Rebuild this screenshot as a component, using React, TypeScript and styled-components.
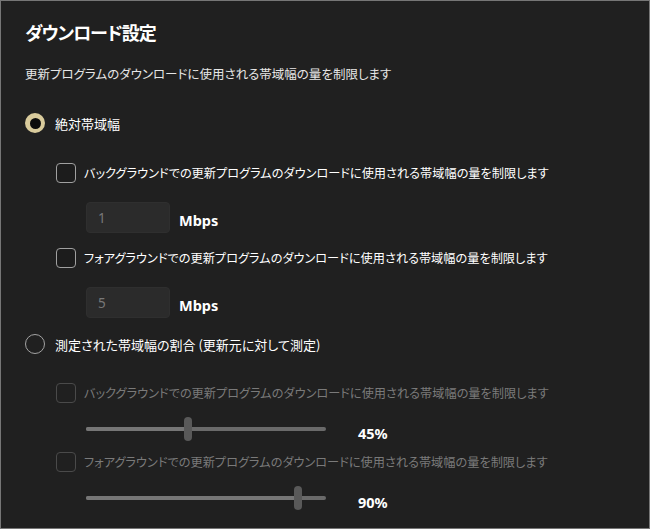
import styled, { createGlobalStyle } from "styled-components";

const GlobalStyle = createGlobalStyle`
  html, body {
    margin: 0;
    padding: 0;
    background: #202020;
  }
  body {
    font-family: "Noto Sans CJK JP", "Noto Sans", sans-serif;
    font-feature-settings: "palt";
    -webkit-font-smoothing: antialiased;
  }
`;

const Frame = styled.div`
  box-sizing: border-box;
  width: 650px;
  height: 529px;
  border: 1px solid #767676;
  background: #202020;
  padding: 19px 24px 0 24px;
  display: flex;
  flex-direction: column;
  color: #ffffff;
`;

const Title = styled.h1`
  margin: 0;
  font-size: 18px;
  line-height: 24px;
  font-weight: 600;
  letter-spacing: -1px;
`;

const Desc = styled.p`
  margin: 20px 0 0 0;
  font-size: 12.5px;
  line-height: 20px;
  color: #e6e6e6;
`;

const RadioRow = styled.div<{ $top: number }>`
  display: flex;
  align-items: center;
  gap: 10px;
  height: 20px;
  margin-top: ${(p) => p.$top}px;
  font-size: 13px;
`;

const RadioDot = styled.span<{ $on?: boolean }>`
  box-sizing: border-box;
  width: 20px;
  height: 20px;
  border-radius: 50%;
  flex: none;
  display: flex;
  align-items: center;
  justify-content: center;
  background: ${(p) => (p.$on ? "#d9cb9c" : "transparent")};
  border: ${(p) => (p.$on ? "none" : "1px solid #a3a3a3")};
  &::after {
    content: "";
    display: ${(p) => (p.$on ? "block" : "none")};
    width: 11px;
    height: 11px;
    border-radius: 50%;
    background: #0d0d0d;
  }
`;

const CheckRow = styled.div<{ $top: number; $disabled?: boolean }>`
  display: flex;
  align-items: center;
  gap: 8px;
  height: 20px;
  margin: ${(p) => p.$top}px 0 0 31px;
  font-size: 12.2px;
  color: ${(p) => (p.$disabled ? "#7a7a7a" : "#ffffff")};
`;

const Box = styled.span<{ $disabled?: boolean }>`
  box-sizing: border-box;
  width: 20px;
  height: 20px;
  flex: none;
  border-radius: 4px;
  border: 1px solid ${(p) => (p.$disabled ? "#4a4a4a" : "#a0a0a0")};
  background: ${(p) => (p.$disabled ? "transparent" : "#1c1c1c")};
`;

const InputRow = styled.div<{ $top: number }>`
  display: flex;
  align-items: center;
  gap: 9px;
  margin: ${(p) => p.$top}px 0 0 61px;
`;

const NumBox = styled.div`
  box-sizing: border-box;
  width: 84px;
  height: 31px;
  border-radius: 4px;
  background: #2b2b2b;
  border: 1px solid #2f2f2f;
  padding-left: 11px;
  display: flex;
  align-items: center;
  font-family: "Noto Sans", sans-serif;
  font-size: 13.5px;
  color: #787878;
`;

const Unit = styled.span`
  font-family: "Noto Sans", sans-serif;
  font-weight: 700;
  font-size: 14.5px;
  color: #ffffff;
  padding-top: 4px;
`;

const SliderRow = styled.div<{ $top: number }>`
  display: flex;
  align-items: center;
  gap: 32px;
  height: 24px;
  margin: ${(p) => p.$top}px 0 0 61px;
`;

const Track = styled.div`
  position: relative;
  width: 240px;
  height: 4px;
  border-radius: 2px;
  background: #6a6a6a;
`;

const Fill = styled.div`
  height: 100%;
  border-radius: 2px;
  background: #767676;
`;

const Thumb = styled.div`
  position: absolute;
  top: -10px;
  width: 8px;
  height: 24px;
  margin-left: -4px;
  border-radius: 4px;
  background: #595959;
`;

const Pct = styled.span`
  font-family: "Noto Sans", sans-serif;
  font-weight: 700;
  font-size: 14.5px;
  color: #ffffff;
  padding-top: 7px;
`;

const limitText =
  "での更新プログラムのダウンロードに使用される帯域幅の量を制限します";

const Slider = ({ value, top }: { value: number; top: number }) => {
  const pos = (value * 110) / 45 - 8;
  return (
    <SliderRow $top={top}>
      <Track>
        <Fill style={{ width: `${pos}px` }} />
        <Thumb style={{ left: `${pos}px` }} />
      </Track>
      <Pct>{value}%</Pct>
    </SliderRow>
  );
};

export default function App() {
  return (
    <>
      <GlobalStyle />
      <Frame>
        <Title>ダウンロード設定</Title>
        <Desc>更新プログラムのダウンロードに使用される帯域幅の量を制限します</Desc>

        <RadioRow $top={29}>
          <RadioDot $on />
          <span>絶対帯域幅</span>
        </RadioRow>

        <CheckRow $top={30}>
          <Box />
          <span>バックグラウンド{limitText}</span>
        </CheckRow>
        <InputRow $top={19}>
          <NumBox>1</NumBox>
          <Unit>Mbps</Unit>
        </InputRow>

        <CheckRow $top={15}>
          <Box />
          <span>フォアグラウンド{limitText}</span>
        </CheckRow>
        <InputRow $top={19}>
          <NumBox>5</NumBox>
          <Unit>Mbps</Unit>
        </InputRow>

        <RadioRow $top={16}>
          <RadioDot />
          <span>測定された帯域幅の割合 (更新元に対して測定)</span>
        </RadioRow>

        <CheckRow $top={29} $disabled>
          <Box $disabled />
          <span>バックグラウンド{limitText}</span>
        </CheckRow>
        <Slider value={45} top={14} />

        <CheckRow $top={11} $disabled>
          <Box $disabled />
          <span>フォアグラウンド{limitText}</span>
        </CheckRow>
        <Slider value={90} top={14} />
      </Frame>
    </>
  );
}
